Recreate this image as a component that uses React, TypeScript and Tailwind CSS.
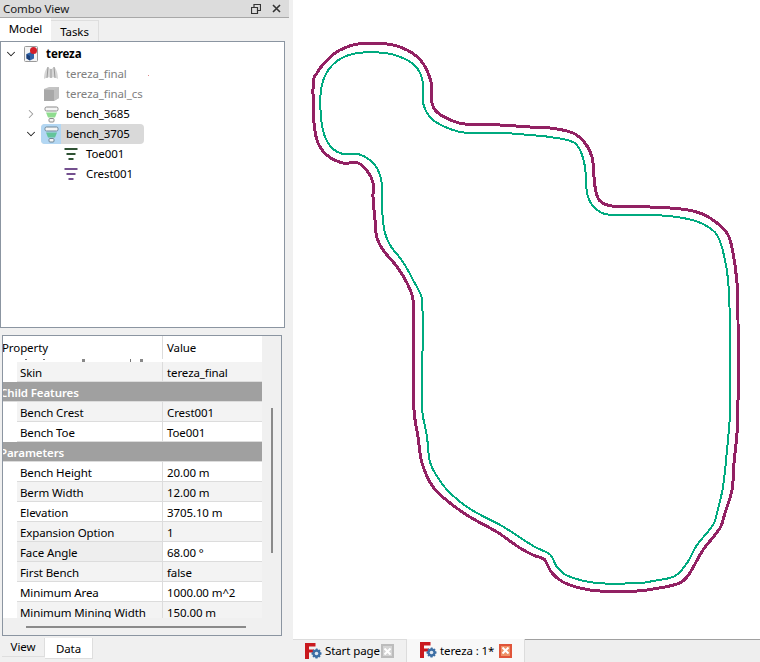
import React from "react";
import { ChevronDown, ChevronRight } from "lucide-react";

const outerCurve =
  "313,90 314,78 317,73 321,67 335,53 347,47 358,44 387,44 407,50 422,62 431,82 432,103 438,113 453,121 465,124 500,125 530,127 550,128 573,133 585,143 592,157 594,177 596,192 600,201 612,206 650,207 670,208 693,211 710,218 727,233 733,253 737,283 738,320 738,403 737,433 734,463 732,490 725,513 720,528 703,550 687,577 677,584 653,589 637,591 600,591 580,588 563,582 552,573 546,562 544,559 533,555 520,548 497,532 470,517 450,503 433,487 422,463 418,437 414,410 413,300 408,285 398,268 383,250 377,238 375,220 373,197 373,183 368,172 358,163 343,163 328,156 318,143 314,123";

const innerCurve =
  "321,90 327,72 340,59 358,53 385,53 403,58 417,68 423,83 423,103 432,119 450,129 467,133 503,133 530,135 550,137 573,142 580,150 585,167 587,193 592,205 602,213 613,215 653,215 683,218 703,224 717,235 725,260 729,293 730,360 730,413 727,450 723,487 717,513 713,525 697,545 687,563 675,576 653,581 640,583 597,583 568,576 557,567 552,557 548,553 535,547 502,526 470,509 450,493 438,478 430,462 427,437 422,408 422,300 413,280 403,262 390,245 385,233 383,220 382,207 382,185 378,170 370,160 358,154 343,154 332,148 325,137 321,117";

// closed spline through the traced points, handles kept to a third of each chord
function smoothPath(raw: string) {
  const pts = raw.split(" ").map((p) => p.split(",").map(Number));
  const n = pts.length;
  const unit = (a: number[], b: number[]) => {
    const len = Math.hypot(b[0] - a[0], b[1] - a[1]) || 1;
    return [(b[0] - a[0]) / len, (b[1] - a[1]) / len];
  };
  let d = `M${pts[0][0]} ${pts[0][1]}`;
  for (let i = 0; i < n; i++) {
    const p0 = pts[(i - 1 + n) % n];
    const p1 = pts[i];
    const p2 = pts[(i + 1) % n];
    const p3 = pts[(i + 2) % n];
    const h = Math.hypot(p2[0] - p1[0], p2[1] - p1[1]) / 3;
    const t1 = unit(p0, p2);
    const t2 = unit(p1, p3);
    d += ` C${p1[0] + t1[0] * h} ${p1[1] + t1[1] * h} ${p2[0] - t2[0] * h} ${p2[1] - t2[1] * h} ${p2[0]} ${p2[1]}`;
  }
  return d + " Z";
}

function DocIcon() {
  return (
    <svg width="16" height="16" viewBox="0 0 16 16">
      <rect x="1.5" y="0.5" width="13" height="15" rx="1" fill="#f4f4f4" stroke="#9a9a9a" />
      <path d="M3.5 8 L8 6 L11 8 L11 12.5 L7 14.5 L3.5 12.5 Z" fill="#2f62a8" />
      <path d="M3.5 8 L7 10 L7 14.5 L3.5 12.5 Z" fill="#1c3f78" />
      <circle cx="10.5" cy="4.5" r="3.5" fill="#d3202a" />
    </svg>
  );
}

function MeshIcon() {
  return (
    <svg width="16" height="16" viewBox="0 0 16 16">
      <path d="M1 13 C1 7 3 2 5 1 C6 2 7 3 8 3 C9 3 10 1.5 11 1 C13 2 15 7 15 13 C12 11 10 11 8 12 C6 11 4 11 1 13 Z" fill="#d6d6d6" />
      <path d="M5 1 L4 12 M8 3 L8 12 M11 1 L12 12" stroke="#999999" strokeWidth="1" fill="none" />
    </svg>
  );
}

function BoxIcon() {
  return (
    <svg width="17" height="16" viewBox="0 0 17 16">
      <path d="M1 3 L6 1 L16 1 L16 12 L11 15 L1 15 Z" fill="#c4c4c4" />
      <path d="M1 3.5 L11 4 L11 15 L1 15 Z" fill="#a8a8a8" />
      <path d="M11 4 L16 1 L16 12 L11 15 Z" fill="#c0c0c0" />
    </svg>
  );
}

function BenchIcon({ mid, edge }: { mid: string; edge: string }) {
  return (
    <svg width="15" height="17" viewBox="0 0 15 17">
      <rect x="1" y="1" width="13" height="4" rx="1.5" fill="#f6f6f6" stroke={edge} />
      <path d="M2 6.5 H13 L11 11.5 H4 Z" fill={mid} />
      <rect x="5" y="12.5" width="5" height="3.5" rx="1" fill="#f6f6f6" stroke={edge} />
    </svg>
  );
}

function LinesIcon({ color }: { color: string }) {
  return (
    <svg width="14" height="14" viewBox="0 0 14 14">
      <rect x="0.5" y="1" width="13" height="2" fill={color} />
      <rect x="2.5" y="6" width="9" height="2" fill={color} />
      <rect x="4.5" y="11" width="5" height="2" fill={color} />
    </svg>
  );
}

function FreecadIcon() {
  return (
    <svg width="17" height="17" viewBox="0 0 17 17">
      <path d="M0 0 H10.5 V3.5 H4 V6.5 H9 V9.5 H4 V16 H0 Z" fill="#c9191e" />
      <path d="M11 5.5 L12.5 5.5 L13 7 L14.5 6.5 L15.5 7.5 L15 9 L16.5 9.5 L16.5 11.5 L15 12 L15.5 13.5 L14.5 14.5 L13 14 L12.5 15.5 L10.5 15.5 L10 14 L8.5 14.5 L7.5 13.5 L8 12 L6.5 11.5 L6.5 9.5 L8 9 L7.5 7.5 L8.5 6.5 L10 7 Z" fill="#3d6fa5" />
      <circle cx="11.5" cy="10.5" r="1.8" fill="#dfe8f2" />
    </svg>
  );
}

function TabClose({ active }: { active: boolean }) {
  return (
    <span
      className={`flex h-[14px] w-[13px] shrink-0 items-center justify-center border-2 ${
        active ? "border-[#e0553a] bg-[#ee9268]" : "border-[#bcbcbc] bg-[#d4d4d4]"
      }`}
    >
      <svg width="7" height="7" viewBox="0 0 7 7">
        <path d="M0.5 0.5 L6.5 6.5 M6.5 0.5 L0.5 6.5" stroke="#ffffff" strokeWidth="2" />
      </svg>
    </span>
  );
}

function TreeRow({
  children,
  label,
  indent,
  chevron,
  muted,
  bold,
  selected,
}: {
  children: React.ReactNode;
  label: string;
  indent: string;
  chevron?: "down" | "right";
  muted?: boolean;
  bold?: boolean;
  selected?: boolean;
}) {
  return (
    <div className={`flex h-5 items-center ${indent}`}>
      <span className="flex w-[19px] shrink-0 items-center pl-[2px]">
        {chevron === "down" && <ChevronDown size={14} strokeWidth={1.8} className="text-[#222]" />}
        {chevron === "right" && <ChevronRight size={14} strokeWidth={1.8} className="text-[#999]" />}
      </span>
      <div className={`flex h-5 items-center ${selected ? "w-[103px] rounded-sm bg-[#d9d9d9]" : ""}`}>
        <span
          className={`flex h-5 w-[20px] shrink-0 items-center justify-center ${
            selected ? "rounded-l-sm bg-[#b3d7f3]" : ""
          }`}
        >
          {children}
        </span>
        <span
          className={`ml-[5px] ${muted ? "text-[#808080]" : "text-black"} ${bold ? "font-bold" : ""}`}
        >
          {label}
        </span>
      </div>
    </div>
  );
}

function PropRow({
  name,
  value,
  shade,
  current,
}: {
  name: string;
  value: string;
  shade?: boolean;
  current?: boolean;
}) {
  return (
    <div className="flex h-5 w-[259px] pl-[14px]">
      <div
        className={`flex w-[146px] items-center border-r border-b border-[#dcdcdc] pt-[2px] pl-[3px] ${
          current ? "bg-[#eeeeee]" : shade ? "bg-[#f3f3f3]" : "bg-white"
        }`}
      >
        {name}
      </div>
      <div
        className={`flex flex-1 items-center border-b border-[#dcdcdc] pt-[2px] pl-[4px] ${
          shade && !current ? "bg-[#f3f3f3]" : "bg-white"
        }`}
      >
        {value}
      </div>
    </div>
  );
}

function GroupRow({ label }: { label: string }) {
  return (
    <div className="flex h-5 w-[259px] items-center overflow-hidden border-b border-[#dcdcdc] bg-[#a0a0a0] pt-[2px] font-semibold text-white">
      <span className="ml-[-3px]">{label}</span>
    </div>
  );
}

export default function App() {
  return (
    <div
      className="flex h-[662px] w-[760px] overflow-hidden bg-white text-[11.5px] leading-none tracking-[-0.1px] text-black"
      style={{ fontFamily: '"Noto Sans", "Liberation Sans", sans-serif' }}
    >
      {/* Left dock */}
      <div className="flex h-full w-[293px] shrink-0 flex-col bg-[#f0f0f0]">
        <div className="mr-[4px] flex h-[18px] shrink-0 items-center justify-between border-b border-[#a8a8a8] bg-[#dcdcdc] pr-[8px] pl-[3px]">
          <span className="text-[#1a1a1a]">Combo View</span>
          <div className="flex items-center gap-[11px]">
            <svg width="10" height="10" viewBox="0 0 10 10">
              <path d="M3 3 V0.5 H9.5 V6.5 H7 M0.5 3.5 H6.5 V9.5 H0.5 Z M0.5 3.5 H6.5" fill="none" stroke="#333" strokeWidth="1.2" />
            </svg>
            <svg width="9" height="9" viewBox="0 0 9 9">
              <path d="M1 1 L8 8 M8 1 L1 8" stroke="#333" strokeWidth="1.6" />
            </svg>
          </div>
        </div>

        {/* Model / Tasks tabs */}
        <div className="flex h-[23px] shrink-0 items-end">
          <div className="flex h-[23px] w-[51px] items-center justify-center bg-white pb-[2px]">Model</div>
          <div className="flex h-[21px] w-[48px] items-center justify-center border-t border-r border-[#dedede] bg-[#f0f0f0] pt-[1px]">
            Tasks
          </div>
        </div>

        {/* Tree */}
        <div className="h-[287px] w-[285px] shrink-0 border border-[#8b95a1] bg-white pt-[2px]">
          <TreeRow label="tereza" indent="pl-[1px]" chevron="down" bold>
            <DocIcon />
          </TreeRow>
          <div className="relative">
            <TreeRow label="tereza_final" indent="pl-[21px]" muted>
              <MeshIcon />
            </TreeRow>
            <span className="absolute top-[11px] left-[147px] h-px w-px bg-[#e08a8a]" />
          </div>
          <TreeRow label="tereza_final_cs" indent="pl-[21px]" muted>
            <BoxIcon />
          </TreeRow>
          <TreeRow label="bench_3685" indent="pl-[21px]" chevron="right">
            <BenchIcon mid="#8fdc8f" edge="#8a8a8a" />
          </TreeRow>
          <TreeRow label="bench_3705" indent="pl-[21px]" chevron="down" selected>
            <BenchIcon mid="#63c49a" edge="#6f8696" />
          </TreeRow>
          <TreeRow label="Toe001" indent="pl-[41px]">
            <LinesIcon color="#2f5234" />
          </TreeRow>
          <TreeRow label="Crest001" indent="pl-[41px]">
            <LinesIcon color="#74508f" />
          </TreeRow>
        </div>

        {/* Property editor */}
        <div className="mt-[7px] ml-[2px] flex h-[301px] w-[280px] shrink-0 flex-col border border-[#8b95a1] bg-[#f0f0f0]">
          <div className="flex min-h-0 flex-1">
            <div className="h-[282px] w-[259px] shrink-0 overflow-hidden bg-white">
              <div className="flex h-[23px] w-[259px]">
                <div className="flex w-[160px] items-center border-r border-[#dcdcdc] pt-[1px]">
                  <span className="-ml-px">Property</span>
                </div>
                <div className="flex flex-1 items-center pt-[1px] pl-[4px]">Value</div>
              </div>
              {/* tops of the row scrolled under the header */}
              <div className="flex h-[3px] w-[259px] items-start pl-[22px]">
                <span className="h-px w-[2px] bg-[#777]" />
                <span className="ml-[16px] h-px w-[2px] bg-[#777]" />
                <span className="ml-[37px] h-[3px] w-[3px] bg-[#888]" />
                <span className="ml-[45px] h-[3px] w-px bg-[#777]" />
                <span className="ml-[9px] h-[3px] w-[3px] bg-[#888]" />
              </div>
              <PropRow name="Skin" value="tereza_final" shade />
              <GroupRow label="Child Features" />
              <PropRow name="Bench Crest" value="Crest001" shade />
              <PropRow name="Bench Toe" value="Toe001" />
              <GroupRow label="Parameters" />
              <PropRow name="Bench Height" value="20.00 m" />
              <PropRow name="Berm Width" value="12.00 m" shade />
              <PropRow name="Elevation" value="3705.10 m" />
              <PropRow name="Expansion Option" value="1" shade />
              <PropRow name="Face Angle" value="68.00 °" current />
              <PropRow name="First Bench" value="false" shade />
              <PropRow name="Minimum Area" value="1000.00 m^2" />
              <PropRow name="Minimum Mining Width" value="150.00 m" shade />
            </div>
            <div className="flex-1 pt-[72px] pl-[9px]">
              <div className="h-[145px] w-[2px] bg-[#8a8a8a]" />
            </div>
          </div>
          <div className="flex h-[17px] shrink-0 items-center pl-[23px]">
            <div className="h-[2px] w-[220px] bg-[#8a8a8a]" />
          </div>
        </div>

        {/* View / Data tabs */}
        <div className="mt-[2px] flex h-[23px] shrink-0 items-start pl-[2px]">
          <div className="flex h-[19px] w-[43px] items-center justify-center border-r border-b border-[#dedede]">View</div>
          <div className="flex h-[21px] w-[48px] items-center justify-center border-r border-b border-[#dedede] bg-white pt-[1px]">
            Data
          </div>
        </div>
      </div>

      {/* 3D view */}
      <div className="flex h-full min-w-0 flex-1 flex-col">
        <div className="min-h-0 flex-1 bg-white">
          <svg
            width="467"
            height="639"
            viewBox="293 0 467 639"
            shapeRendering="crispEdges"
            className="block"
          >
            <path d={smoothPath(outerCurve)} fill="none" stroke="#922163" strokeWidth="3" />
            <path d={smoothPath(innerCurve)} fill="none" stroke="#00aa7f" strokeWidth="2" />
          </svg>
        </div>
        <div className="flex h-[23px] shrink-0 items-stretch bg-[#f0f0f0]">
          <div className="flex w-[114px] items-center border-t border-r border-[#dcdcdc] pl-[12px]">
            <FreecadIcon />
            <span className="ml-[3px] w-[52px] shrink-0 whitespace-nowrap">Start page</span>
            <span className="ml-[4px]">
              <TabClose active={false} />
            </span>
          </div>
          <div className="flex w-[118px] items-center border-r border-[#dcdcdc] bg-[#f8f8f8] pl-[13px]">
            <FreecadIcon />
            <span className="ml-[3px] w-[55px] shrink-0 whitespace-nowrap">tereza : 1*</span>
            <span className="ml-[4px]">
              <TabClose active />
            </span>
          </div>
          <div className="flex-1 border-t border-[#a0a0a0] bg-[#eeeeee]" />
        </div>
      </div>
    </div>
  );
}
